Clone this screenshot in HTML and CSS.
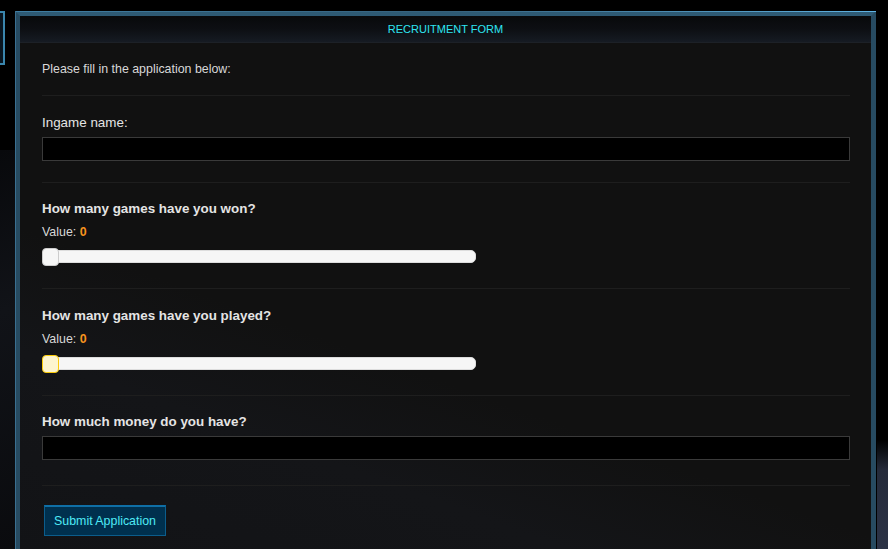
FILE: index.html
```html
<!DOCTYPE html>
<html>
<head>
<meta charset="utf-8">
<link rel="stylesheet" href="styles.css">
</head>
<body>
<div class="page">
  <div class="side-box"></div>
  <div class="panel">
    <div class="panel-head">RECRUITMENT FORM</div>
    <div class="panel-body">
      <div class="intro">Please fill in the application below:</div>
      <div class="field f1">
        <div class="label">Ingame name:</div>
        <div class="input"></div>
      </div>
      <div class="field f2">
        <div class="label bold">How many games have you won?</div>
        <div class="value">Value: <span class="num">0</span></div>
        <div class="slider"><div class="handle"></div></div>
      </div>
      <div class="field f3">
        <div class="label bold">How many games have you played?</div>
        <div class="value">Value: <span class="num">0</span></div>
        <div class="slider"><div class="handle hover"></div></div>
      </div>
      <div class="field f4">
        <div class="label bold">How much money do you have?</div>
        <div class="input"></div>
      </div>
      <div class="actions">
        <button class="submit">Submit Application</button>
      </div>
    </div>
  </div>
</div>
</body>
</html>
```

FILE: styles.css
```css
html, body {
  margin: 0;
  padding: 0;
  background: #000;
  height: 100%;
  overflow: hidden;
}
.page {
  position: relative;
  width: 888px;
  height: 549px;
  overflow: hidden;
  font-family: "Liberation Sans", Arial, sans-serif;
  background:
    linear-gradient(180deg, transparent 0, transparent 440px, #252b3a 470px, #2c3346 549px) 877px 0 / 11px 549px no-repeat,
    linear-gradient(160deg, #08090c 0, #111318 40%, #0a0b0e 100%) 0 150px / 15px 399px no-repeat,
    #000;
  padding-top: 11px;
  box-sizing: border-box;
}
.side-box {
  position: absolute;
  left: -10px;
  top: 11px;
  width: 11px;
  height: 50px;
  border: 2px solid #3a86ad;
  background: #0a1620;
}
.panel {
  margin-left: 15px;
  width: 861px;
  border: 5px solid #274b61;
  border-bottom: none;
  border-top-color: #2e5a74;
  box-shadow: inset 0 0 0 1px #1a3342;
  box-sizing: border-box;
  position: relative;
  background: #111;
}
.panel::before {
  content: "";
  position: absolute;
  left: -5px;
  top: -5px;
  right: -5px;
  height: 1px;
  background: linear-gradient(90deg, #3f7ea3, #35607b 50%, #5fb4e4);
}
.panel::after {
  content: "";
  position: absolute;
  left: -5px;
  top: -5px;
  bottom: 0;
  width: 1px;
  background: #3a6f90;
}
.panel-head {
  height: 26px;
  line-height: 27px;
  text-align: center;
  font-size: 11px;
  color: #2ee6f2;
  background: linear-gradient(180deg, #08090b 0%, #0d0f13 50%, #161b23 100%);
  border-bottom: 1px solid #1d2127;
}
.panel-body {
  padding: 0 21px 20px 22px;
  background: linear-gradient(200deg, #111 0, #111 60%, #141518 75%, #121316 100%);
}
.intro {
  font-size: 12.4px;
  line-height: 15px;
  color: #d8d8d8;
  padding: 19px 0 18px;
  border-bottom: 1px solid #1e1e1e;
}
.field {
  border-bottom: 1px solid #1e1e1e;
  padding-top: 18px;
}
.f1 { padding-top: 19px; padding-bottom: 21px; }
.f1 .input { margin-top: 6px; }
.f2 { padding-bottom: 22px; }
.f3 { padding-top: 19px; padding-bottom: 22px; }
.f4 { padding-bottom: 25px; }
.f4 .input { margin-top: 6px; }
.label {
  font-size: 13.4px;
  line-height: 16px;
  color: #e4e4e4;
}
.label.bold {
  font-weight: bold;
}
.input {
  margin-top: 7px;
  height: 24px;
  box-sizing: border-box;
  background: #000;
  border: 1px solid #3a3a3a;
}
.value {
  margin-top: 7px;
  font-size: 12.4px;
  line-height: 16px;
  color: #d8d8d8;
}
.num {
  color: #f7931e;
  font-weight: bold;
}
.slider {
  position: relative;
  margin-top: 8px;
  height: 18px;
  width: 434px;
}
.slider::before {
  content: "";
  position: absolute;
  left: 0;
  right: 0;
  top: 2px;
  height: 13px;
  box-sizing: border-box;
  background: #f6f6f6;
  border: 1px solid #dddddd;
  border-radius: 5px;
}
.handle {
  position: absolute;
  left: 0;
  top: 0;
  width: 17px;
  height: 18px;
  box-sizing: border-box;
  background: #f6f6f6;
  border: 1px solid #cccccc;
  border-radius: 4px;
}
.handle.hover {
  background: #fdf5ce;
  border-color: #fbcb09;
}
.actions {
  padding-top: 19px;
  padding-left: 2px;
}
.submit {
  display: block;
  width: 122px;
  height: 31px;
  margin: 0;
  padding: 0;
  font-family: "Liberation Sans", Arial, sans-serif;
  font-size: 12.4px;
  color: #4eeaf5;
  background: #00304e;
  border: 1px solid #0b5d8c;
  border-top: 2px solid #0f6fa6;
  box-sizing: border-box;
  line-height: 27px;
}
```
